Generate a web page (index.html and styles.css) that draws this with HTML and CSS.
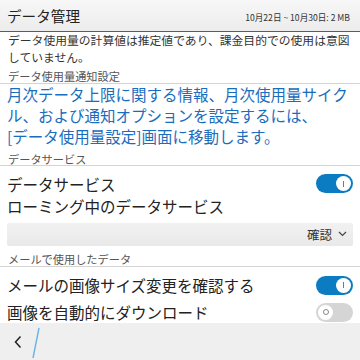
FILE: index.html
```html
<!DOCTYPE html>
<html lang="ja">
<head>
    <meta charset="UTF-8">
    <meta name="viewport" content="width=device-width, initial-scale=1.0">
    <title>データ管理</title>
    <link rel="stylesheet" href="styles.css">
</head>
<body>

    <div class="topbar">
        <h1 class="title">データ管理</h1>
        <span class="period">10月22日 ~ 10月30日: 2 MB</span>
    </div>

    <div class="content">
        <p class="intro">データ使用量の計算値は推定値であり、課金目的での使用は意図していません。</p>

        <h3 class="section-title">データ使用量通知設定</h3>
        <p class="link-text">月次データ上限に関する情報、月次使用量サイクル、および通知オプションを設定するには、<span class="nowrap">[データ使用量設定]画面に移動します。</span></p>

        <h3 class="section-title second">データサービス</h3>
        <div class="row first">
            <span>データサービス</span>
            <span class="toggle on"><span class="knob"></span></span>
        </div>
        <div class="row">
            <span>ローミング中のデータサービス</span>
        </div>
        <div class="dropdown">
            <span>確認</span>
            <svg class="chevron" width="9" height="6" viewBox="0 0 9 6">
                <path d="M1 1 L4.5 4.5 L8 1" fill="none" stroke="#444" stroke-width="1.2"/>
            </svg>
        </div>

        <h3 class="section-title third">メールで使用したデータ</h3>
        <div class="row tall mail-first">
            <span>メールの画像サイズ変更を確認する</span>
            <span class="toggle on"><span class="knob"></span></span>
        </div>
        <div class="row tall">
            <span>画像を自動的にダウンロード</span>
            <span class="toggle off"><span class="knob"></span></span>
        </div>
    </div>

    <div class="bottombar">
        <svg class="back" width="10" height="14" viewBox="0 0 10 14">
            <path d="M7.5 1.5 L2.5 7 L7.5 12.5" fill="none" stroke="#222" stroke-width="1.5"/>
        </svg>
        <svg class="divider" width="10" height="32" viewBox="0 0 10 32">
            <path d="M8 1 L2 31" stroke="#6cb2e2" stroke-width="1.4"/>
        </svg>
    </div>

</body>
</html>
```

FILE: styles.css
```css
body {
    margin: 0;
    font-family: "Noto Sans CJK JP", "Noto Sans", sans-serif;
    background-color: #fff;
    color: #222;
    width: 360px;
    height: 360px;
    overflow: hidden;
}
.topbar {
    height: 31px;
    display: flex;
    align-items: center;
    justify-content: space-between;
    padding: 0 10px 0 7px;
    background: linear-gradient(#f7f7f7, #ececec);
    border-bottom: 1px solid #1e6ea6;
}
.title {
    margin: 0;
    font-size: 14.6px;
    font-weight: normal;
    color: #222;
}
.period {
    font-size: 8.6px;
    color: #333;
    padding-top: 2px;
}
.content {
    height: 291px;
    overflow: hidden;
}
.intro {
    margin: -1.5px 0 0 0;
    padding: 0 8px;
    font-size: 11.8px;
    line-height: 17px;
    color: #333;
}
.section-title {
    margin: 5px 0 0 0;
    padding: 0 8px;
    font-size: 11.2px;
    font-weight: normal;
    line-height: 13px;
    color: #555;
    border-bottom: 1px solid #d4d4d4;
}
.section-title.second {
    margin-top: 6px;
    line-height: 12px;
}
.section-title.third {
    margin-top: 7px;
}
.link-text {
    margin: 0;
    padding: 0 7px;
    font-size: 15.5px;
    line-height: 21px;
    color: #1a6dbd;
}
.nowrap {
    white-space: nowrap;
}
.row {
    height: 22px;
    display: flex;
    align-items: center;
    justify-content: space-between;
    padding: 0 7px;
    font-size: 15.5px;
}
.row.first {
    margin-top: 7px;
}
.row.tall {
    height: 27px;
}
.row.mail-first {
    margin-top: 5px;
}
.toggle {
    width: 37px;
    height: 19px;
    border-radius: 10px;
    display: flex;
    align-items: center;
    padding: 0 2px;
    box-sizing: border-box;
}
.toggle.on {
    background-color: #0b7cc1;
    justify-content: flex-end;
}
.toggle.off {
    background-color: #d5d5d5;
    justify-content: flex-start;
}
.knob {
    width: 15px;
    height: 15px;
    border-radius: 50%;
    background-color: #fff;
    display: flex;
    align-items: center;
    justify-content: center;
}
.toggle.on .knob::after {
    content: "";
    width: 1px;
    height: 6px;
    background-color: #777;
}
.toggle.off .knob::after {
    content: "";
    width: 4px;
    height: 4px;
    border-radius: 50%;
    border: 1px solid #888;
}
.dropdown {
    margin: 6px 7px 0 7px;
    height: 23px;
    display: flex;
    align-items: center;
    justify-content: flex-end;
    gap: 6px;
    padding: 0 6px;
    background: linear-gradient(#f1f1f1, #e9e9e9);
    border-radius: 2px;
    font-size: 12.5px;
    color: #333;
}
.bottombar {
    height: 37px;
    display: flex;
    align-items: center;
    padding-left: 13px;
    gap: 8px;
    background-color: #efefef;
}
.divider {
    margin-top: 2px;
}
```
